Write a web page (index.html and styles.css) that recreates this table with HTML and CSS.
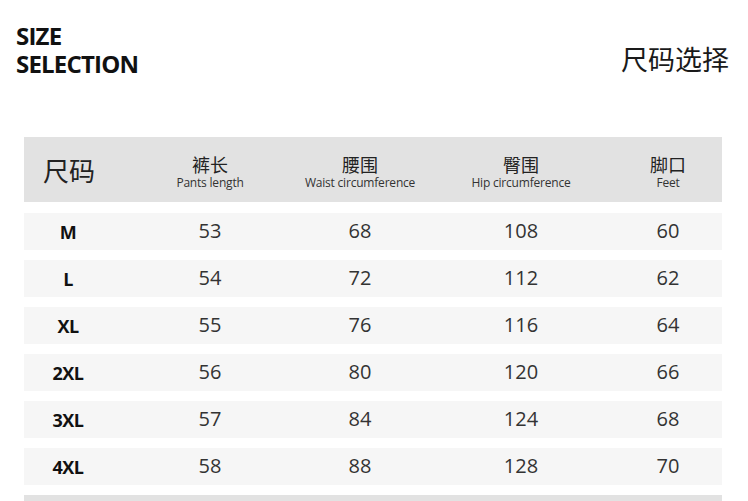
FILE: index.html
```html
<!DOCTYPE html>
<html lang="zh">
<head>
<meta charset="utf-8">
<link rel="stylesheet" href="styles.css">
</head>
<body>
<div class="page">
  <header class="top">
    <h1 class="title">SIZE<br>SELECTION</h1>
    <div class="title-cn">尺码选择</div>
  </header>
  <div class="table">
    <div class="row head">
      <div class="cell first"><span class="cn-big">尺码</span></div>
      <div class="cell"><span class="cn">裤长</span><span class="en">Pants length</span></div>
      <div class="cell"><span class="cn">腰围</span><span class="en">Waist circumference</span></div>
      <div class="cell"><span class="cn">臀围</span><span class="en">Hip circumference</span></div>
      <div class="cell"><span class="cn">脚口</span><span class="en">Feet</span></div>
    </div>
    <div class="row"><div class="cell size">M</div><div class="cell num">53</div><div class="cell num">68</div><div class="cell num">108</div><div class="cell num">60</div></div>
    <div class="row"><div class="cell size">L</div><div class="cell num">54</div><div class="cell num">72</div><div class="cell num">112</div><div class="cell num">62</div></div>
    <div class="row"><div class="cell size">XL</div><div class="cell num">55</div><div class="cell num">76</div><div class="cell num">116</div><div class="cell num">64</div></div>
    <div class="row"><div class="cell size">2XL</div><div class="cell num">56</div><div class="cell num">80</div><div class="cell num">120</div><div class="cell num">66</div></div>
    <div class="row"><div class="cell size">3XL</div><div class="cell num">57</div><div class="cell num">84</div><div class="cell num">124</div><div class="cell num">68</div></div>
    <div class="row"><div class="cell size">4XL</div><div class="cell num">58</div><div class="cell num">88</div><div class="cell num">128</div><div class="cell num">70</div></div>
    <div class="row foot"></div>
  </div>
</div>
</body>
</html>
```
FILE: styles.css
```css
html, body {
  margin: 0;
  padding: 0;
  background: #fff;
}
body {
  font-family: "Open Sans", "Noto Sans CJK SC", sans-serif;
  color: #222;
  overflow: hidden;
  height: 501px;
}
.page {
  width: 748px;
}
.top {
  display: flex;
  justify-content: space-between;
  align-items: flex-start;
  padding: 22px 19px 0 16px;
  height: 115px;
  box-sizing: border-box;
}
.title {
  margin: 0;
  font-family: "Open Sans", sans-serif;
  font-weight: 700;
  font-size: 24px;
  line-height: 28px;
  letter-spacing: -0.8px;
  color: #111;
}
.title-cn {
  margin-top: 20px;
  font-family: "Noto Sans CJK SC", sans-serif;
  font-size: 27px;
  line-height: 34px;
  font-weight: 400;
  color: #1a1a1a;
}
.table {
  margin: 22px 26px 0 24px;
  display: flex;
  flex-direction: column;
  gap: 10px;
}
.row {
  display: grid;
  grid-template-columns: 88px 196px 104px 218px 76px;
  padding-right: 16px;
  height: 37px;
  background: #f6f6f6;
}
.row.head {
  height: 65px;
  background: #e2e2e2;
  margin-bottom: 1px;
}
.row.foot {
  background: #e2e2e2;
  height: 30px;
}
.cell {
  display: flex;
  flex-direction: column;
  align-items: center;
  justify-content: center;
  white-space: nowrap;
}
.head .cell {
  padding-top: 6px;
}
.cn-big {
  font-family: "Noto Sans CJK SC", sans-serif;
  font-size: 26px;
  line-height: 30px;
  color: #222;
  margin-left: 2px;
  margin-top: -6px;
}
.cn {
  font-family: "Noto Sans CJK SC", sans-serif;
  font-size: 18px;
  line-height: 21px;
  color: #222;
}
.en {
  font-family: "Open Sans", sans-serif;
  font-size: 12px;
  line-height: 16px;
  color: #333;
  letter-spacing: -0.2px;
}
.size {
  font-family: "Open Sans", sans-serif;
  font-weight: 700;
  font-size: 18px;
  color: #111;
  letter-spacing: -0.5px;
}
.num {
  font-family: "Open Sans", sans-serif;
  font-weight: 400;
  font-size: 20px;
  color: #333;
  padding-bottom: 2px;
}
```
